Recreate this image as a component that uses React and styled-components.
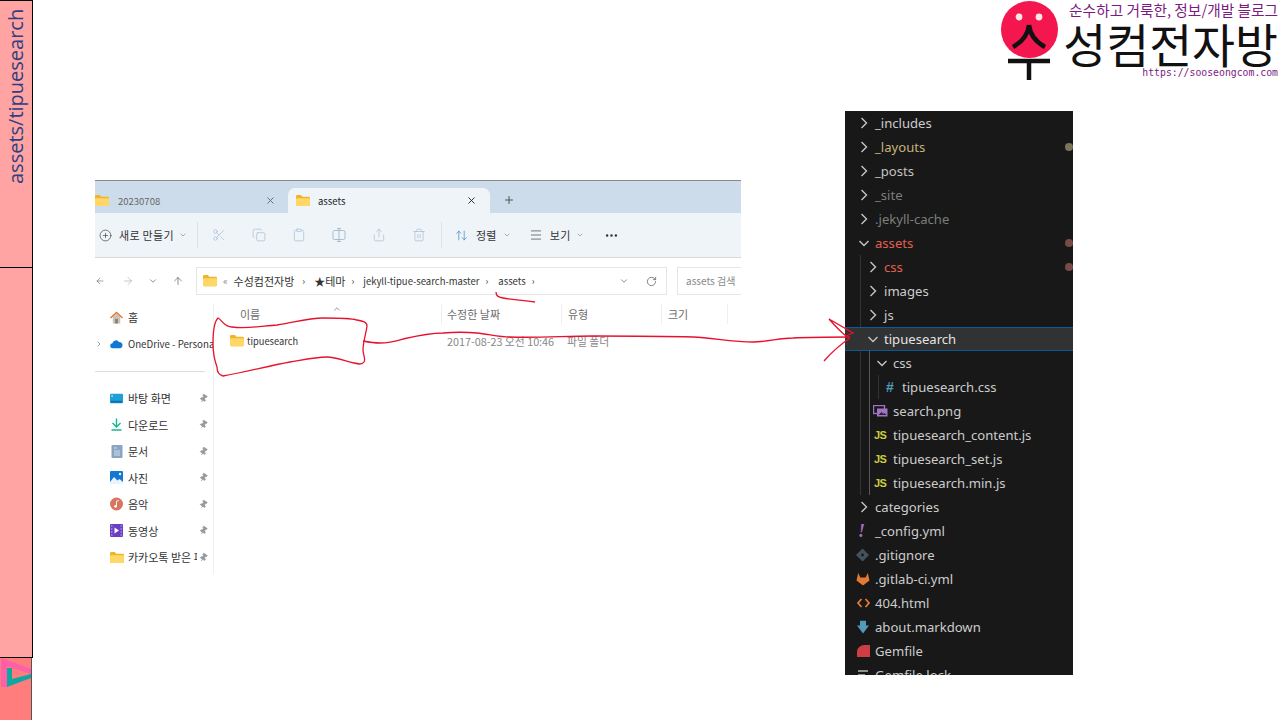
import styled, { createGlobalStyle } from "styled-components";
import { Scissors, Copy, Clipboard, Share, Trash2, ArrowUp, ArrowLeft, ArrowRight, ChevronDown, ChevronRight, RotateCw, Plus, X, CirclePlus, Menu, MoreHorizontal, Pin, ArrowUpDown } from "lucide-react";

const GlobalStyle = createGlobalStyle`
  html, body { margin: 0; padding: 0; background: #fff; }
  body { font-family: "Noto Sans", "Noto Sans CJK KR", sans-serif; }
`;

const Slide = styled.div`
  position: relative;
  width: 1280px;
  height: 720px;
  overflow: hidden;
  display: flex;
  background: #fff;
`;

/* left strip */
const Strip = styled.div`
  width: 33px;
  height: 720px;
  flex: none;
  display: flex;
  flex-direction: column;
`;
const TitleBlock = styled.div`
  height: 268px;
  box-sizing: border-box;
  background: #ffa3a3;
  border: 1px solid #000;
  border-left: 0;
  display: flex;
  justify-content: center;
  padding-top: 8px;
`;
const TitleText = styled.div`
  writing-mode: vertical-rl;
  transform: rotate(180deg);
  height: 175px;
  text-align: left;
  font-family: "Open Sans", sans-serif;
  font-size: 20px;
  line-height: 30px;
  color: #2f3f80;
  white-space: nowrap;
`;
const MiddleBlock = styled.div`
  height: 390px;
  box-sizing: border-box;
  background: #ffa3a3;
  border-right: 1px solid #000;
  border-bottom: 1px solid #000;
`;
const BottomBlock = styled.div`
  flex: 1;
  width: 32px;
  box-sizing: border-box;
  background: #ff7d7d;
  border-right: 1px solid #555;
`;

/* explorer window */
const Explorer = styled.div`
  width: 646px;
  height: 395px;
  margin: 180px 0 0 62px;
  flex: none;
  border-top: 1px solid #8a8a8a;
  overflow: hidden;
  font-family: "Noto Sans CJK KR", "Noto Sans", sans-serif;
  font-size: 9.5px;
  color: #333;
`;
const TabBar = styled.div`
  height: 32px;
  display: flex;
  align-items: flex-end;
  background: #ccdcea;
  color: #666;
`;
const Tab = styled.div`
  box-sizing: border-box;
  height: 25px;
  width: ${p => p.$w}px;
  display: flex;
  align-items: center;
  padding: ${p => (p.$active ? "0 13px 0 8px" : "0 12px 0 0")};
  gap: 8px;
  background: ${p => (p.$active ? "#eff4f9" : "transparent")};
  border-radius: 7px 7px 0 0;
  color: ${p => (p.$active ? "#222" : "#666")};
  & > span { flex: 1; }
`;
const NewTab = styled.div`
  margin: 0 0 7px 13px;
  color: #555;
  display: flex;
`;
const Toolbar = styled.div`
  height: 45px;
  box-sizing: border-box;
  background: #eff4f9;
  border-bottom: 1px solid #d8d8d8;
  display: flex;
  align-items: center;
  padding-left: 4px;
`;
const ToolLabel = styled.div`
  display: flex;
  align-items: center;
  gap: ${p => p.$gap || 7}px;
  margin-left: ${p => p.$ml || 0}px;
  color: #333;
  font-size: 11px;
  letter-spacing: 0.3px;
  white-space: nowrap;
  & > svg:last-child:not(:first-child) { margin-left: -2px; }
`;
const ToolDivider = styled.div`
  width: 1px;
  height: 26px;
  margin-left: ${p => p.$ml}px;
  background: #dde2e7;
`;
const ToolIcon = styled.div`
  width: 40px;
  display: flex;
  justify-content: center;
  color: #a6bdd2;
  margin-left: ${p => p.$ml || 0}px;
`;
const NavRow = styled.div`
  height: 46px;
  box-sizing: border-box;
  display: flex;
  align-items: flex-start;
  padding: 9px 0 0 0;
  background: #fff;
`;
const NavButton = styled.div`
  width: ${p => p.$w}px;
  margin-left: ${p => p.$ml || 0}px;
  flex: none;
  height: 28px;
  display: flex;
  align-items: center;
  justify-content: center;
  color: ${p => p.$c || "#555"};
`;
const AddressBox = styled.div`
  width: 471px;
  height: 28px;
  flex: none;
  box-sizing: border-box;
  margin-left: 12px;
  border: 1px solid #e6e6e6;
  display: flex;
  align-items: center;
  padding: 0 9px 0 6px;
  color: #333;
  white-space: nowrap;
`;
const Crumb = styled.span`
  margin-left: ${p => p.$ml}px;
  color: ${p => p.$c || "#333"};
  font-size: ${p => (p.$ko ? "11px" : "9.5px")};
`;
const AddressEnd = styled.div`
  margin-left: auto;
  display: flex;
  align-items: center;
  gap: 17px;
  color: #777;
`;
const SearchBox = styled.div`
  width: 80px;
  height: 28px;
  flex: none;
  box-sizing: border-box;
  margin-left: 10px;
  border: 1px solid #e6e6e6;
  padding-left: 8px;
  line-height: 26px;
  font-size: 10px;
  color: #8a8a8a;
  white-space: nowrap;
`;
const Body = styled.div`
  display: flex;
  height: 270px;
`;
const NavPane = styled.div`
  width: 119px;
  flex: none;
  box-sizing: border-box;
  border-right: 1px solid #f0f0f0;
`;
const NavItem = styled.div`
  height: 26.5px;
  display: flex;
  align-items: center;
  padding-left: 15px;
  gap: 5px;
  position: relative;
  white-space: nowrap;
  overflow: hidden;
  font-size: ${p => (p.$latin ? "9.7px" : "11px")};
  & > span { overflow: hidden; width: ${p => p.$tw || 86}px; flex: none; }
`;
const NavIcon = styled.div`
  width: 13px;
  flex: none;
  display: flex;
  justify-content: center;
`;
const Expander = styled.div`
  position: absolute;
  left: 0;
  color: #666;
  display: flex;
`;
const PinMark = styled.div`
  position: absolute;
  left: 104px;
  color: #999;
  display: flex;
`;
const NavRule = styled.div`
  height: 1px;
  margin: 13.5px 0 13.5px 0;
  background: #dedede;
  width: 110px;
`;
const Files = styled.div`
  flex: 1;
  position: relative;
`;
const Columns = styled.div`
  display: grid;
  grid-template-columns: 228px 120px 100px 66px;
  height: ${p => p.$h}px;
  align-items: center;
  color: ${p => p.$c || "#6b6b6b"};
`;
const HeadCell = styled.div`
  height: 20px;
  line-height: 20px;
  font-size: 11px;
  padding-left: ${p => p.$pl || 5}px;
  border-right: 1px solid #efefef;
`;
const SortCaret = styled.div`
  position: absolute;
  left: 118px;
  top: 0;
  color: #888;
  display: flex;
`;
const NameCell = styled.div`
  display: flex;
  align-items: center;
  gap: 3px;
  padding-left: 16px;
  font-size: 9.3px;
  color: #333;
`;
const ValueCell = styled.div`
  padding-left: 5px;
  font-size: 10.8px;
  color: #888;
  white-space: nowrap;
`;

/* right column */
const RightColumn = styled.div`
  width: 435px;
  margin-left: 104px;
  flex: none;
  display: flex;
  flex-direction: column;
`;
const Brand = styled.div`
  align-self: flex-end;
  width: 280px;
  height: 80px;
  margin-bottom: 31px;
  display: flex;
`;
const BrandText = styled.div`
  flex: 1;
  display: flex;
  flex-direction: column;
  align-items: flex-end;
  padding-right: 2px;
  white-space: nowrap;
`;
const Tagline = styled.div`
  font-family: "Noto Sans CJK KR", sans-serif;
  font-size: 14.7px;
  line-height: 20px;
  color: #7c1a82;
`;
const BrandName = styled.div`
  font-family: "Noto Sans CJK KR", sans-serif;
  font-size: 46.7px;
  line-height: 46px;
  color: #111;
`;
const BrandUrl = styled.div`
  font-family: "DejaVu Sans Mono", monospace;
  font-size: 9.8px;
  line-height: 14px;
  color: #7c1a82;
`;

/* vscode tree */
const Tree = styled.div`
  width: 228px;
  height: 564px;
  background: #181818;
  overflow: hidden;
  font-family: "Noto Sans", sans-serif;
  font-size: 13.1px;
`;
const Row = styled.div`
  position: relative;
  height: 24px;
  box-sizing: border-box;
  display: flex;
  align-items: center;
  white-space: nowrap;
  padding-left: ${p => 30 + p.$level * 9}px;
  padding-bottom: 1px;
  color: ${p => p.$c || "#cccccc"};
  ${p => p.$selected && "background: #313234; border-top: 1px solid #0b5a97; border-bottom: 1px solid #0b5a97; color: #e4e4e4;"}
`;
const Guide = styled.div`
  position: absolute;
  left: ${p => p.$x}px;
  top: 0;
  bottom: 0;
  width: 1px;
  background: ${p => p.$c || "#333"};
`;
const RowIcon = styled.div`
  position: absolute;
  left: ${p => p.$x}px;
  top: 50%;
  transform: translateY(-50%);
  display: flex;
  align-items: center;
  justify-content: center;
`;
const JsBadge = styled.span`
  font-family: "Liberation Sans", sans-serif;
  font-size: 11px;
  font-weight: 700;
  letter-spacing: -0.5px;
  color: #cbcb41;
`;
const HashBadge = styled.span`
  font-family: "Liberation Sans", sans-serif;
  font-size: 14px;
  font-weight: 700;
  color: #519aba;
`;
const BangBadge = styled.span`
  font-family: "Liberation Serif", serif;
  font-size: 18px;
  font-weight: 700;
  font-style: italic;
  color: #a074c4;
`;
const Dot = styled.div`
  position: absolute;
  left: 220px;
  top: 8px;
  width: 8px;
  height: 8px;
  border-radius: 50%;
  background: ${p => p.$c};
`;
const Ink = styled.svg`
  position: absolute;
  left: 0;
  top: 0;
  pointer-events: none;
`;

const FolderIcon = ({ size = 14 }) => (
  <svg width={size} height={size * 0.8} viewBox="0 0 20 16" style={{ flex: "none" }}>
    <path d="M0 2a2 2 0 0 1 2-2h5l2 2.5h9a2 2 0 0 1 2 2V14a2 2 0 0 1-2 2H2a2 2 0 0 1-2-2z" fill="#f0b429" />
    <path d="M0 6a1.5 1.5 0 0 1 1.5-1.5H18.5A1.5 1.5 0 0 1 20 6v8a2 2 0 0 1-2 2H2a2 2 0 0 1-2-2z" fill="#ffd767" />
  </svg>
);

const HomeIcon = () => (
  <svg width="14" height="13" viewBox="0 0 14 13">
    <path d="M3 6v7h8V6L7 2.5z" fill="#c9c3bb" />
    <rect x="5.5" y="8" width="3" height="5" fill="#8a8078" />
    <path d="M0.5 7L7 1l6.5 6" fill="none" stroke="#e0792c" strokeWidth="1.6" />
  </svg>
);
const CloudIcon = () => (
  <svg width="14" height="10" viewBox="0 0 14 10">
    <path d="M3 9.5a2.6 2.6 0 0 1-.4-5.2A3.9 3.9 0 0 1 9.8 3 3.2 3.2 0 0 1 13.5 6.4 3 3 0 0 1 11 9.5z" fill="#0f78d4" />
  </svg>
);
const DesktopIcon = () => (
  <svg width="14" height="11" viewBox="0 0 14 11">
    <rect width="14" height="10" y="0.5" rx="1" fill="#1d9fd8" />
    <rect x="1" y="8" width="12" height="2" fill="#0f6ea8" />
    <rect x="1.5" y="2" width="1.5" height="1.5" fill="#dff" />
  </svg>
);
const DownloadIcon = () => (
  <svg width="13" height="13" viewBox="0 0 13 13" fill="none" stroke="#16b88a" strokeWidth="1.4">
    <path d="M6.5 0.5v8M2.5 5l4 4 4-4M1.5 12h10" />
  </svg>
);
const DocIcon = () => (
  <svg width="12" height="13" viewBox="0 0 12 13">
    <rect x="0.5" width="11" height="13" rx="1" fill="#8aa4c4" />
    <path d="M3 3h3M3 6h6M3 8h6M3 10h6" stroke="#e4edf5" strokeWidth="0.8" />
  </svg>
);
const PhotoIcon = () => (
  <svg width="13" height="13" viewBox="0 0 13 13">
    <rect width="13" height="13" rx="1" fill="#1479d4" />
    <path d="M0 11l4-5 3.5 3.5L9.5 8 13 11v2H0z" fill="#e9f4fd" />
    <circle cx="10" cy="3" r="1.2" fill="#e9f4fd" />
  </svg>
);
const MusicIcon = () => (
  <svg width="14" height="14" viewBox="0 0 14 14">
    <circle cx="7" cy="7" r="7" fill="#d9745e" />
    <circle cx="6" cy="9.5" r="1.5" fill="#fff" />
    <path d="M7 9.5V4l2.5-.8" stroke="#fff" strokeWidth="1" fill="none" />
  </svg>
);
const VideoIcon = () => (
  <svg width="13" height="13" viewBox="0 0 13 13">
    <rect width="13" height="13" rx="1" fill="#6b3fc4" />
    <path d="M4.5 3.5l4.5 3-4.5 3z" fill="#fff" />
    <path d="M1 2h1.5M1 5h1.5M1 8h1.5M1 11h1.5M10.5 2H12M10.5 5H12M10.5 8H12M10.5 11H12" stroke="#c8b4ef" strokeWidth="1" />
  </svg>
);
const SmallPin = () => <Pin size={9} fill="#999" strokeWidth={2} style={{ transform: "rotate(30deg)" }} />;

const FaceLogo = () => (
  <svg width="60" height="80" viewBox="1000 0 60 80" style={{ flex: "none" }}>
    <circle cx="1029.5" cy="29.5" r="28.5" fill="#f3164f" />
    <circle cx="1019" cy="17" r="3.4" fill="#fde6e6" />
    <circle cx="1039" cy="17" r="3.4" fill="#fde6e6" />
    <path d="M1029 25c-1 9-7 17-16 22M1029 25c1 9 7 17 16 22" fill="none" stroke="#111" strokeWidth="4.5" />
    <path d="M1008 61h42M1029 61v19" fill="none" stroke="#111" strokeWidth="4.5" />
  </svg>
);

const Chevron = ({ open }) =>
  open ? (
    <svg width="12" height="12" viewBox="0 0 12 12" fill="none" stroke="#c5c5c5" strokeWidth="1.4"><path d="M1.5 4l4.5 4.5L10.5 4" /></svg>
  ) : (
    <svg width="12" height="12" viewBox="0 0 12 12" fill="none" stroke="#c5c5c5" strokeWidth="1.4"><path d="M3.5 1L8.5 6 3.5 11" /></svg>
  );

const ImageGlyph = () => (
  <svg width="15" height="12" viewBox="0 0 15 12">
    <rect x="0.5" y="0.5" width="11" height="8" fill="none" stroke="#a074c4" strokeWidth="1.4" />
    <rect x="4" y="3.5" width="10.5" height="8" fill="#a074c4" />
    <path d="M5.5 10l3-3 2 2 1-1 2 2z" fill="#2b2238" />
  </svg>
);
const GitGlyph = () => (
  <svg width="13" height="13" viewBox="0 0 13 13">
    <path d="M6.5 0L13 6.5 6.5 13 0 6.5z" fill="#41535b" />
    <circle cx="6.5" cy="6.5" r="1.4" fill="#181818" />
  </svg>
);
const GitlabGlyph = () => (
  <svg width="14" height="13" viewBox="0 0 14 13">
    <path d="M7 13L0.5 8 2.2 0.5 4.4 5h5.2l2.2-4.5L13.5 8z" fill="#e37933" />
  </svg>
);
const HtmlGlyph = () => (
  <svg width="13" height="10" viewBox="0 0 13 10" fill="none" stroke="#e37933" strokeWidth="1.8">
    <path d="M4.5 1L1 5l3.5 4M8.5 1L12 5 8.5 9" />
  </svg>
);
const MarkdownGlyph = () => (
  <svg width="12" height="13" viewBox="0 0 12 13">
    <path d="M3 0h6v5h3L6 13 0 5h3z" fill="#519aba" />
  </svg>
);
const GemGlyph = () => (
  <svg width="13" height="12" viewBox="0 0 13 12">
    <path d="M0 12V6.5C0 3 3.5 0 7.5 0H13v12z" fill="#cc3e44" />
  </svg>
);
const LockGlyph = () => (
  <svg width="11" height="10" viewBox="0 0 11 10" stroke="#b8b8b8" strokeWidth="1.4">
    <path d="M0 1h10M0 5h7M0 9h10" />
  </svg>
);

const yellowish = "#c8b27c";
const red = "#e2604f";
const dim = "#7d7d7d";

const treeRows = [
  { name: "_includes", level: 0, chevron: false },
  { name: "_layouts", level: 0, chevron: false, c: yellowish, dot: "#7d7358" },
  { name: "_posts", level: 0, chevron: false, c: "#c2c2c2" },
  { name: "_site", level: 0, chevron: false, c: dim },
  { name: ".jekyll-cache", level: 0, chevron: false, c: dim },
  { name: "assets", level: 0, chevron: true, c: red, dot: "#7a4a45" },
  { name: "css", level: 1, chevron: false, c: red, dot: "#7a4a45", guides: [15] },
  { name: "images", level: 1, chevron: false, guides: [15] },
  { name: "js", level: 1, chevron: false, guides: [15] },
  { name: "tipuesearch", level: 1, chevron: true, selected: true, guides: [15] },
  { name: "css", level: 2, chevron: true, guides: [15, 24] },
  { name: "tipuesearch.css", level: 3, icon: <HashBadge>#</HashBadge>, iconX: 41, guides: [15, 24, 33] },
  { name: "search.png", level: 2, icon: <ImageGlyph />, iconX: 28, guides: [15, 24] },
  { name: "tipuesearch_content.js", level: 2, icon: <JsBadge>JS</JsBadge>, iconX: 29, guides: [15, 24] },
  { name: "tipuesearch_set.js", level: 2, icon: <JsBadge>JS</JsBadge>, iconX: 29, guides: [15, 24] },
  { name: "tipuesearch.min.js", level: 2, icon: <JsBadge>JS</JsBadge>, iconX: 29, guides: [15, 24] },
  { name: "categories", level: 0, chevron: false },
  { name: "_config.yml", level: 0, icon: <BangBadge>!</BangBadge>, iconX: 13 },
  { name: ".gitignore", level: 0, icon: <GitGlyph />, iconX: 11 },
  { name: ".gitlab-ci.yml", level: 0, icon: <GitlabGlyph />, iconX: 11 },
  { name: "404.html", level: 0, icon: <HtmlGlyph />, iconX: 12 },
  { name: "about.markdown", level: 0, icon: <MarkdownGlyph />, iconX: 12 },
  { name: "Gemfile", level: 0, icon: <GemGlyph />, iconX: 12 },
  { name: "Gemfile.lock", level: 0, icon: <LockGlyph />, iconX: 13 },
];

const navTop = [
  { icon: <DesktopIcon />, label: "바탕 화면" },
  { icon: <DownloadIcon />, label: "다운로드" },
  { icon: <DocIcon />, label: "문서" },
  { icon: <PhotoIcon />, label: "사진" },
  { icon: <MusicIcon />, label: "음악" },
  { icon: <VideoIcon />, label: "동영상" },
  { icon: <FolderIcon size={14} />, label: "카카오톡 받은 파일", tw: 69 },
];

const App = () => {
  return (
    <Slide>
      <GlobalStyle />
      <Strip>
        <TitleBlock>
          <TitleText>assets/tipuesearch</TitleText>
        </TitleBlock>
        <MiddleBlock />
        <BottomBlock>
          <svg width="31" height="33" viewBox="0 0 31 33">
            <path d="M1 0L31 11v5L7 8v21H1z" fill="#ff5fa8" />
            <path d="M7 10h5v11l19-5v4L7 29z" fill="#0fa8a0" />
          </svg>
        </BottomBlock>
      </Strip>

      <Explorer>
        <TabBar>
          <Tab $w={193}>
            <FolderIcon />
            <span style={{ marginLeft: 1 }}>20230708</span>
            <X size={11} />
          </Tab>
          <Tab $active $w={202}>
            <FolderIcon />
            <span>assets</span>
            <X size={11} />
          </Tab>
          <NewTab><Plus size={12} /></NewTab>
        </TabBar>
        <Toolbar>
          <ToolLabel>
            <CirclePlus size={13} color="#444" strokeWidth={1.3} />
            새로 만들기
            <ChevronDown size={8} color="#888" />
          </ToolLabel>
          <ToolDivider $ml={10} />
          <ToolIcon $ml={1}><Scissors size={14} strokeWidth={1.2} /></ToolIcon>
          <ToolIcon><Copy size={14} strokeWidth={1.2} /></ToolIcon>
          <ToolIcon><Clipboard size={14} strokeWidth={1.2} /></ToolIcon>
          <ToolIcon>
            <svg width="14" height="14" viewBox="0 0 14 14" fill="none" stroke="#a6bdd2">
              <rect x="1" y="2.5" width="12" height="9" rx="1.5" />
              <path d="M7 0.5v13M5 0.5h4M5 13.5h4" />
            </svg>
          </ToolIcon>
          <ToolIcon><Share size={14} strokeWidth={1.2} /></ToolIcon>
          <ToolIcon><Trash2 size={14} strokeWidth={1.2} /></ToolIcon>
          <ToolDivider $ml={2} />
          <ToolLabel $ml={13} $gap={8}>
            <ArrowUpDown size={13} color="#3a86c8" strokeWidth={1.3} />
            정렬
            <ChevronDown size={8} color="#888" />
          </ToolLabel>
          <ToolLabel $ml={18}>
            <Menu size={14} color="#444" strokeWidth={1.2} />
            보기
            <ChevronDown size={8} color="#888" />
          </ToolLabel>
          <ToolLabel $ml={20}>
            <MoreHorizontal size={15} color="#333" strokeWidth={2} />
          </ToolLabel>
        </Toolbar>
        <NavRow>
          <NavButton $w={10}><ArrowLeft size={12} strokeWidth={1.3} /></NavButton>
          <NavButton $w={12} $ml={17} $c="#aaa"><ArrowRight size={12} strokeWidth={1.3} /></NavButton>
          <NavButton $w={12} $ml={13} $c="#777"><ChevronDown size={10} /></NavButton>
          <NavButton $w={12} $ml={13}><ArrowUp size={12} strokeWidth={1.3} /></NavButton>
          <AddressBox>
            <FolderIcon />
            <Crumb $ml={6} $c="#777">«</Crumb>
            <Crumb $ml={6} $ko>수성컴전자방</Crumb>
            <Crumb $ml={8}>›</Crumb>
            <Crumb $ml={9} $ko>★테마</Crumb>
            <Crumb $ml={6}>›</Crumb>
            <Crumb $ml={9}>jekyll-tipue-search-master</Crumb>
            <Crumb $ml={6}>›</Crumb>
            <Crumb $ml={10}>assets</Crumb>
            <Crumb $ml={6}>›</Crumb>
            <AddressEnd>
              <ChevronDown size={10} />
              <RotateCw size={11} />
            </AddressEnd>
          </AddressBox>
          <SearchBox>assets 검색</SearchBox>
        </NavRow>
        <Body>
          <NavPane>
            <NavItem><NavIcon><HomeIcon /></NavIcon><span>홈</span></NavItem>
            <NavItem $latin $tw={90}>
              <Expander><ChevronRight size={8} /></Expander>
              <NavIcon><CloudIcon /></NavIcon>
              <span>OneDrive - Personal</span>
            </NavItem>
            <NavRule />
            {navTop.map(item => (
              <NavItem key={item.label} $tw={item.tw}>
                <NavIcon>{item.icon}</NavIcon>
                <span>{item.label}</span>
                <PinMark><SmallPin /></PinMark>
              </NavItem>
            ))}
          </NavPane>
          <Files>
            <SortCaret><ChevronDown size={10} style={{ transform: "rotate(180deg)" }} /></SortCaret>
            <Columns $h={20}>
              <HeadCell $pl={26}>이름</HeadCell>
              <HeadCell>수정한 날짜</HeadCell>
              <HeadCell $pl={6}>유형</HeadCell>
              <HeadCell $pl={6}>크기</HeadCell>
            </Columns>
            <Columns $h={34}>
              <NameCell><FolderIcon />tipuesearch</NameCell>
              <ValueCell>2017-08-23 오전 10:46</ValueCell>
              <ValueCell>파일 폴더</ValueCell>
              <div />
            </Columns>
          </Files>
        </Body>
      </Explorer>

      <RightColumn>
        <Brand>
          <FaceLogo />
          <BrandText>
            <Tagline>순수하고 거룩한, 정보/개발 블로그</Tagline>
            <BrandName>성컴전자방</BrandName>
            <BrandUrl>https://sooseongcom.com</BrandUrl>
          </BrandText>
        </Brand>
        <Tree>
          {treeRows.map((row, i) => (
            <Row key={i} $level={row.level} $c={row.c} $selected={row.selected}>
              {(row.guides || []).map(x => (
                <Guide key={x} $x={x} $c={x === 24 ? "#585858" : undefined} />
              ))}
              {row.chevron !== undefined && (
                <RowIcon $x={13 + row.level * 9}><Chevron open={row.chevron} /></RowIcon>
              )}
              {row.icon && <RowIcon $x={row.iconX}>{row.icon}</RowIcon>}
              {row.name}
              {row.dot && <Dot $c={row.dot} />}
            </Row>
          ))}
        </Tree>
      </RightColumn>

      <Ink width="1280" height="720" viewBox="0 0 1280 720" fill="none" stroke="#e8112d" strokeWidth="1.3">
        <path d="M496 292C496 296 498 297 503 298C512 300 524 300 535 302" />
        <path d="M218 318C222 320 224 327 232 327C248 329 262 326 277 325C292 323 308 318 323 318C336 318 350 318 357 320C363 321 367 322 367 326C366 334 363 342 363 350C363 354 366 360 364 362C362 365 358 364 354 363C345 361 336 357 327 357C315 357 302 360 290 362C268 366 246 372 223 376C219 375 217 372 217 367C214 359 213 351 213 343C213 334 214 322 218 318Z" />
        <path d="M363 341C368 342 374 343 380 343C388 343 396 341 403 339C416 336 430 333 443 333C455 332 466 332 477 333C488 334 499 337 510 337C538 338 565 336 593 336C626 336 660 336 693 337C713 338 733 342 753 342C767 342 780 338 793 338C812 337 831 337 850 337" />
        <path d="M829 319L853 333L846 336M829 319C836 327 841 332 846 336M850 338C841 344 832 352 824 361" />
      </Ink>
    </Slide>
  );
};

export default App;
